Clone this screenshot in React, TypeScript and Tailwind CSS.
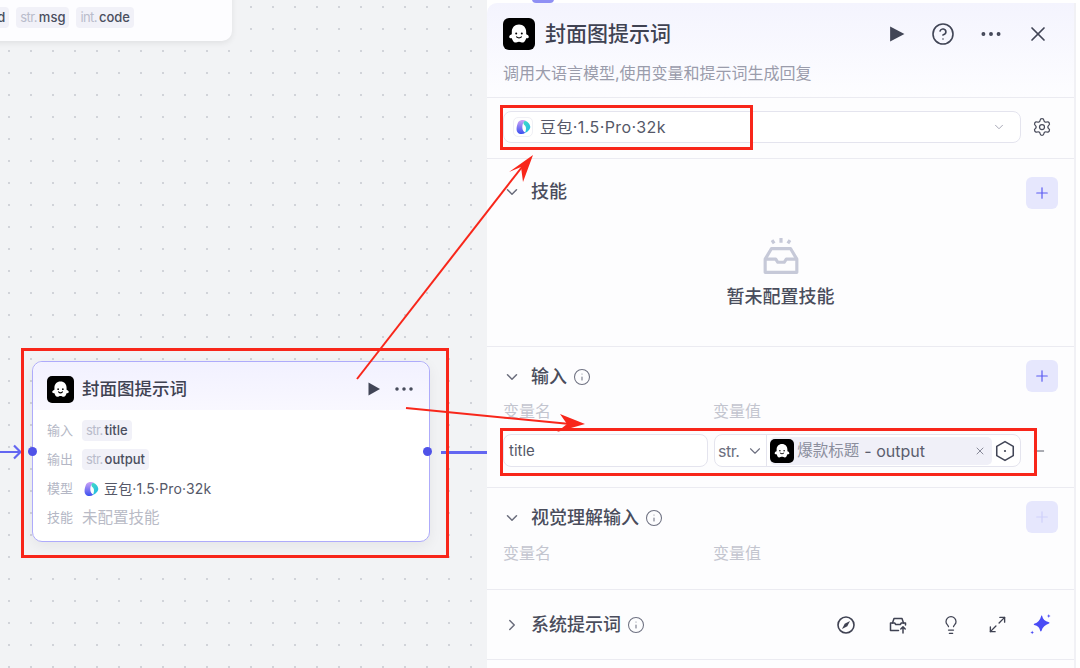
import { ChevronDown, ChevronRight, CircleHelp, Ellipsis, Info, Lightbulb, Maximize2, Minus, Plus, Settings, X } from "lucide-react";

function GhostLogo({ box }: { box: string }) {
  return (
    <div className={`${box} flex shrink-0 items-center justify-center bg-black`}>
      <svg viewBox="0 0 32 32" className="h-full w-full">
        <path
          d="M16 6.500c-4.400 0-7.200 3.200-7.200 7.400v2.400c-1.500.5-2.600 1.500-2.600 2.700 0 1.100 1.200 1.500 2.600 1.300.7 1.900 1.600 4.300 3.500 4.300 1.300 0 2.100-.9 3.700-.9s2.400.9 3.700.9c1.900 0 2.800-2.400 3.500-4.300 1.400.2 2.600-.2 2.600-1.300 0-1.200-1.100-2.200-2.600-2.700v-2.400c0-4.200-2.800-7.400-7.200-7.400z"
          fill="#fff"
        />
        <circle cx="13.200" cy="15.600" r="1" fill="#000" />
        <circle cx="18.800" cy="15.600" r="1" fill="#000" />
        <path d="M13.600 18.800c1.300 1.300 3.500 1.300 4.800 0" stroke="#000" strokeWidth="1.200" fill="none" strokeLinecap="round" />
      </svg>
    </div>
  );
}

function DoubaoLogo({ size }: { size: string }) {
  return (
    <svg viewBox="0 0 16 16" className={`${size} shrink-0`}>
      <defs>
        <linearGradient id="dbA" x1="0" y1="0" x2="0" y2="1">
          <stop offset="0" stopColor="#cfa4f6" />
          <stop offset="1" stopColor="#3a50f0" />
        </linearGradient>
        <linearGradient id="dbB" x1="0" y1="0" x2="1" y2="1">
          <stop offset="0" stopColor="#41dcc4" />
          <stop offset="1" stopColor="#22b6e8" />
        </linearGradient>
      </defs>
      <path d="M3.500 2.800C5 .6 9 .4 11 1.800 8.800 2.600 7.300 5 7.300 8c0 2.700 1 4.600 3.100 5.800C7.500 15.800 3.200 15.400 1.900 12.200 1 9.500 2.200 4.800 3.500 2.800z" fill="url(#dbA)" />
      <path d="M9.800 2c2.500-.3 5.200 3 5.500 5.800.1 1.900-2.500 5.600-5.600 6.200 1.100-1.600 1.600-4 1.100-6-.3-1.100-.9-1.800-1.700-2.300-.9-.6-.9-3.300.7-3.700z" fill="url(#dbB)" />
    </svg>
  );
}

function Tag({ type, name }: { type: string; name: string }) {
  return (
    <span className="flex h-[21px] items-center gap-[2px] rounded-[4px] bg-[#f1f1f8] px-1 text-[13px] font-medium">
      <span className="font-normal tracking-[-0.6px] text-[#b9bccb]">{type}</span>
      <span className="text-[#4a4e5e]">{name}</span>
    </span>
  );
}

function NodeRow({ label, children }: { label: string; children: React.ReactNode }) {
  return (
    <div className="flex h-[29px] items-center gap-[9px]">
      <span className="text-[13px] text-[#b4b7c5]">{label}</span>
      {children}
    </div>
  );
}

function AddButton({ faded }: { faded?: boolean }) {
  return (
    <div className="flex h-8 w-8 items-center justify-center rounded-md bg-[#e6e7fd]">
      <Plus size={18} strokeWidth={1.6} className={faded ? "text-[#cfd1fb]" : "text-[#5a5cf2]"} />
    </div>
  );
}

function SectionTitle({ title, info, open = true }: { title: string; info?: boolean; open?: boolean }) {
  return (
    <div className="flex items-center">
      <span className="flex w-[28px] justify-start text-[#6a6d7c]">
        {open ? <ChevronDown size={18} strokeWidth={2} /> : <ChevronRight size={18} strokeWidth={2} />}
      </span>
      <span className="text-[18px] font-medium leading-6 text-[#4a4d5c]">{title}</span>
      {info && <Info size={18} strokeWidth={1.4} className="ml-[6px] text-[#6f7282]" />}
    </div>
  );
}

function VarLabels() {
  return (
    <div className="flex text-[16px] leading-5 text-[#c3c5cf]">
      <span className="w-[210px]">变量名</span>
      <span>变量值</span>
    </div>
  );
}

function ToolIcons() {
  return (
    <div className="flex items-center text-[#3f4252]">
      <svg viewBox="0 0 20 20" className="mr-[32px] h-5 w-5" fill="none" stroke="currentColor" strokeWidth="1.600">
        <circle cx="10" cy="10" r="8" />
        <path d="M14 6 11.300 11.300 6 14 8.700 8.700z" fill="currentColor" stroke="none" />
      </svg>
      <svg viewBox="0 0 20 20" className="mr-[33px] h-5 w-5" fill="none" stroke="currentColor" strokeWidth="1.500" strokeLinejoin="round" strokeLinecap="round">
        <path d="M4.500 8 6 3.500h8L15.500 8" />
        <path d="M2.500 8h4.200l1 1.500h4.600l1-1.500h4.200v2M2.500 8v7.500h8" />
        <path d="M15 18v-6M12.800 14 15 11.800 17.200 14" />
      </svg>
      <Lightbulb size={20} strokeWidth={1.5} className="mr-[27px]" />
      <Maximize2 size={19} strokeWidth={1.7} className="mr-[21px]" />
      <svg viewBox="0 0 20 20" className="h-[24px] w-[24px]" fill="#4a4cf5">
        <path d="M11.800 2.500c.6 2.700 2.200 4.400 5.700 5.300.5.200.5.800 0 1-3.200 1.100-5.300 2.900-6.300 6.200-.2.500-.8.500-1 0-.5-2.700-2-4.300-5-5-.5-.2-.5-.8 0-1 3-1 5-3.200 5.800-6.500.1-.5.700-.5.800 0z" />
        <path d="M17.300 .8c.2 1 .6 1.500 1.600 1.700-1 .2-1.400.6-1.600 1.600-.2-1-.6-1.400-1.600-1.600 1-.2 1.400-.7 1.600-1.700zM3.500 14.500c.2 1 .6 1.500 1.600 1.700-1 .2-1.400.6-1.600 1.600-.2-1-.6-1.400-1.600-1.600 1-.2 1.400-.7 1.600-1.700z" />
      </svg>
    </div>
  );
}

function CoverNode() {
  return (
    <div className="absolute left-[32px] top-[361px] h-[181px] w-[398px] rounded-[10px] border border-[#aeabfb] bg-white shadow-[0_4px_14px_rgba(0,0,0,0.06)]">
      <div className="flex h-[48px] items-center rounded-t-[10px] bg-gradient-to-b from-[#f2f1ff] to-[#f9f8ff] pl-[14px] pr-[13px] pt-[6px]">
        <GhostLogo box="h-[27px] w-[27px] rounded-[5px]" />
        <span className="ml-[8px] text-[17.500px] font-medium text-[#3f4252]">封面图提示词</span>
        <svg viewBox="0 0 14 14" className="ml-auto mr-[11px] h-[14px] w-[14px]" fill="#414556">
          <path d="M1.500 0.500 13 7 1.500 13.500z" />
        </svg>
        <Ellipsis size={24} strokeWidth={1.500} className="text-[#414556]" />
      </div>
      <div className="px-[14px] pt-[6px]">
        <NodeRow label="输入">
          <Tag type="str." name="title" />
        </NodeRow>
        <NodeRow label="输出">
          <Tag type="str." name="output" />
        </NodeRow>
        <NodeRow label="模型">
          <span className="flex items-center gap-[5px] pl-[1px] text-[14px] tracking-[0.15px] text-[#555868]">
            <DoubaoLogo size="h-4 w-4" />
            豆包·1.5·Pro·32k
          </span>
        </NodeRow>
        <NodeRow label="技能">
          <span className="text-[15.500px] leading-5 text-[#b9bbc6]">未配置技能</span>
        </NodeRow>
      </div>
      <span className="absolute left-[-5px] top-[85px] h-[9px] w-[9px] rounded-full bg-[#4f52e8]" />
      <span className="absolute right-[-3px] top-[85px] h-[9px] w-[9px] rounded-full bg-[#4f52e8]" />
    </div>
  );
}

function Canvas() {
  return (
    <div className="relative h-[668px] w-[487px] shrink-0 overflow-hidden bg-[#f2f3f5] bg-[radial-gradient(#d0d2d8_0.7px,transparent_1px)] bg-[size:22px_22px] bg-[position:-2px_-4px]">
      <div className="absolute left-[-16px] top-[-10px] flex h-[51px] w-[248px] items-end gap-[7px] rounded-br-[10px] bg-[#fdfdff] pb-[13px] pl-[4px] shadow-[0_2px_6px_rgba(0,0,0,0.08)]">
        <span className="flex h-[21px] items-center rounded-[4px] bg-[#f1f1f8] pl-[6px] pr-1 text-[13px] font-medium text-[#4a4e5e]">id</span>
        <Tag type="str." name="msg" />
        <Tag type="int." name="code" />
      </div>
      <svg viewBox="0 0 22 16" className="absolute left-0 top-[444px] h-4 w-[22px]" fill="none" stroke="#6366f1" strokeWidth="2.200">
        <path d="M0 8h20M14 1.500 20.500 8 14 14.500" />
      </svg>
      <div className="absolute left-[441px] top-[451px] h-[2.500px] w-[46px] bg-[#6366f1]" />
      <CoverNode />
    </div>
  );
}

function Panel() {
  return (
    <div className="relative mt-[3px] h-[665px] w-[589px] shrink-0 overflow-hidden rounded-tl-[10px] border-r-2 border-[#f1f1f5] bg-[#fdfdfe]">
      <div className="h-[95px] border-b border-[#ebebf1] bg-gradient-to-b from-[#f4f4fe] to-[#fdfdff] px-4">
        <div className="flex h-[60px] items-center pt-[2px]">
          <GhostLogo box="h-8 w-8 rounded-md" />
          <span className="ml-[10px] text-[21px] font-medium text-[#3f4252]">封面图提示词</span>
          <svg viewBox="0 0 14 14" className="ml-auto mr-[26px] h-[16px] w-[16px]" fill="#414556">
            <path d="M1 0.500 13.500 7 1 13.500z" />
          </svg>
          <CircleHelp size={24} strokeWidth={1.600} className="mr-[23px] text-[#414556]" />
          <Ellipsis size={26} strokeWidth={1.600} className="mr-[22px] text-[#414556]" />
          <X size={24} strokeWidth={1.700} className="mr-[8px] text-[#414556]" />
        </div>
        <p className="text-[16px] leading-5 text-[#9a9cab]">调用大语言模型,使用变量和提示词生成回复</p>
      </div>
      <div className="flex h-[61px] items-center border-b border-[#ebebf1] px-4 pb-[2px]">
        <div className="flex h-[32px] w-[518px] items-center rounded-lg border border-[#e4e4ee] bg-white pl-[9px] pr-[14px]">
          <span className="flex h-5 w-5 items-center justify-center rounded-[5px] border border-[#f0f0f5]">
            <DoubaoLogo size="h-4 w-4" />
          </span>
          <span className="ml-[7px] text-[16px] tracking-[0.4px] text-[#555868]">豆包·1.5·Pro·32k</span>
          <ChevronDown size={14} strokeWidth={1.500} className="ml-auto text-[#9a9cab]" />
        </div>
        <Settings size={20} strokeWidth={1.500} className="ml-[11px] text-[#4a4d5c]" />
      </div>
      <div className="h-[188px] border-b border-[#ebebf1] px-4 pt-[18px]">
        <div className="flex items-center justify-between">
          <div className="-translate-y-px">
            <SectionTitle title="技能" />
          </div>
          <AddButton />
        </div>
        <div className="mt-[29px] flex flex-col items-center">
          <svg viewBox="0 0 36 36" className="h-[38px] w-[38px]" fill="none">
            <path d="M18 0v4.500M9.500 2l2 3M26.500 2l-2 3" stroke="#c6c9d8" strokeWidth="3" />
            <path d="M9 10h18l6 10v12.500H3V20z" stroke="#c6c9d8" strokeWidth="3" strokeLinejoin="round" />
            <path d="M3 20h10l2 3h6l2-3h10" stroke="#c6c9d8" strokeWidth="3" strokeLinejoin="round" />
          </svg>
          <span className="mt-[7px] text-[18px] font-medium text-[#4a4d5c]">暂未配置技能</span>
        </div>
      </div>
      <div className="h-[141px] border-b border-[#ebebf1] px-4 pt-[13px]">
        <div className="flex items-center justify-between">
          <div className="translate-y-px">
            <SectionTitle title="输入" info />
          </div>
          <AddButton />
        </div>
        <div className="mt-[9px]">
          <VarLabels />
        </div>
        <div className="mt-[13px] flex items-center">
          <div className="flex h-[33px] w-[205px] items-center rounded-lg border border-[#e4e4ee] bg-white px-[5px] pt-[2px] text-[15px] text-[#555868]">title</div>
          <div className="ml-[6px] flex h-[33px] w-[307px] items-center rounded-lg border border-[#e4e4ee] bg-white">
            <span className="ml-[3px] text-[16px] tracking-[-0.500px] text-[#6d7080]">str.</span>
            <ChevronDown size={18} strokeWidth={1.500} className="ml-[7px] text-[#6d7080]" />
            <div className="ml-[2px] flex h-full items-center border-l border-[#e4e4ee] pl-[3px]">
              <div className="flex h-[28px] w-[222px] items-center rounded-[5px] bg-[#f0f0f8] pr-[6px]">
                <GhostLogo box="h-6 w-6 rounded-[5px]" />
                <span className="ml-[3px] text-[15.500px] text-[#8b8e9d]">爆款标题</span>
                <span className="ml-[5px] text-[16px] text-[#5b5e6e]">- output</span>
                <X size={12} strokeWidth={1.600} className="ml-auto text-[#6d7080]" />
              </div>
            </div>
            <svg viewBox="0 0 20 20" className="ml-[2px] h-[22px] w-[22px]" fill="none" stroke="#414556" strokeWidth="1.400">
              <path d="M10 1.500 17.500 5.800v8.400L10 18.500 2.500 14.200V5.800z" strokeLinejoin="round" />
              <circle cx="10" cy="10" r="1" fill="#414556" stroke="none" />
            </svg>
          </div>
          <Minus size={16} strokeWidth={1.400} className="ml-[10px] text-[#4a4d5c]" />
        </div>
      </div>
      <div className="h-[102px] border-b border-[#ebebf1] px-4 pt-[13px]">
        <div className="flex items-center justify-between">
          <div className="translate-y-px">
            <SectionTitle title="视觉理解输入" info />
          </div>
          <AddButton faded />
        </div>
        <div className="mt-[10px]">
          <VarLabels />
        </div>
      </div>
      <div className="flex h-[70px] items-center justify-between border-b border-[#ebebf1] pl-4 pr-[22px]">
        <SectionTitle title="系统提示词" info open={false} />
        <ToolIcons />
      </div>
    </div>
  );
}

// red annotations drawn on the screenshot, they sit above everything else
function Annotations() {
  return (
    <>
      <div className="absolute left-[21px] top-[348px] h-[210px] w-[428px] border-[3px] border-[#f8261a]" />
      <div className="absolute left-[500px] top-[105px] h-[45px] w-[253px] border-[3px] border-[#f8261a]" />
      <div className="absolute left-[500px] top-[428px] h-[48px] w-[537px] border-[3px] border-[#f8261a]" />
      <svg className="absolute left-0 top-0 h-[668px] w-[1080px]" viewBox="0 0 1080 668" fill="none">
        <path d="M357 379 522 167" stroke="#f8261a" strokeWidth="2" />
        <path d="M533 155 509 172 521 167 523 182z" fill="#f8261a" />
        <path d="M406 408 570 424" stroke="#f8261a" strokeWidth="2" />
        <path d="M585 424 560 414 567 424 557 432z" fill="#f8261a" />
      </svg>
    </>
  );
}

export default function App() {
  return (
    <div className="relative flex h-[668px] w-[1080px] overflow-hidden bg-white font-['Inter','Noto_Sans_CJK_SC',sans-serif]">
      <Canvas />
      <Panel />
      <div className="absolute left-[532px] top-[-5px] h-[8px] w-[22px] rounded-full bg-[#8f90f4]" />
      <Annotations />
    </div>
  );
}
